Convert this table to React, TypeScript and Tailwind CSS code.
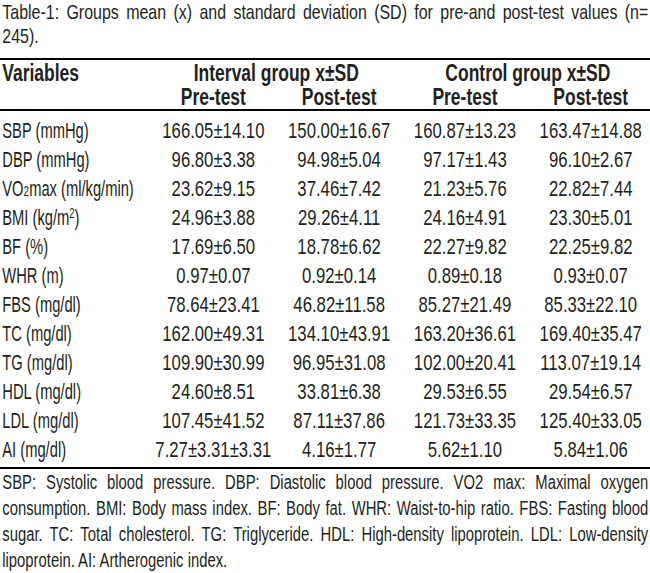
import { FC } from "react";

interface Row {
  label: React.ReactNode;
  values: string[];
}

const rows: Row[] = [
  { label: "SBP (mmHg)", values: ["166.05±14.10", "150.00±16.67", "160.87±13.23", "163.47±14.88"] },
  { label: "DBP (mmHg)", values: ["96.80±3.38", "94.98±5.04", "97.17±1.43", "96.10±2.67"] },
  {
    label: (
      <>
        VO<span className="text-[15px]">2</span>max (ml/kg/min)
      </>
    ),
    values: ["23.62±9.15", "37.46±7.42", "21.23±5.76", "22.82±7.44"],
  },
  {
    label: (
      <>
        BMI (kg/m<sup className="text-[14px]">2</sup>)
      </>
    ),
    values: ["24.96±3.88", "29.26±4.11", "24.16±4.91", "23.30±5.01"],
  },
  { label: "BF (%)", values: ["17.69±6.50", "18.78±6.62", "22.27±9.82", "22.25±9.82"] },
  { label: "WHR (m)", values: ["0.97±0.07", "0.92±0.14", "0.89±0.18", "0.93±0.07"] },
  { label: "FBS (mg/dl)", values: ["78.64±23.41", "46.82±11.58", "85.27±21.49", "85.33±22.10"] },
  { label: "TC (mg/dl)", values: ["162.00±49.31", "134.10±43.91", "163.20±36.61", "169.40±35.47"] },
  { label: "TG (mg/dl)", values: ["109.90±30.99", "96.95±31.08", "102.00±20.41", "113.07±19.14"] },
  { label: "HDL (mg/dl)", values: ["24.60±8.51", "33.81±6.38", "29.53±6.55", "29.54±6.57"] },
  { label: "LDL (mg/dl)", values: ["107.45±41.52", "87.11±37.86", "121.73±33.35", "125.40±33.05"] },
  { label: "AI (mg/dl)", values: ["7.27±3.31±3.31", "4.16±1.77", "5.62±1.10", "5.84±1.06"] },
];

const footLines = [
  "SBP: Systolic blood pressure. DBP: Diastolic blood pressure. VO2 max: Maximal oxygen",
  "consumption. BMI: Body mass index. BF: Body fat. WHR: Waist-to-hip ratio. FBS: Fasting blood",
  "sugar. TC: Total cholesterol. TG: Triglyceride. HDL: High-density lipoprotein. LDL: Low-density",
];

// the source face is a condensed one; lay out wide and squeeze horizontally
const App: FC = () => {
  return (
    <div className="w-[650px] h-[573px] bg-white overflow-hidden">
      <div
        className="w-[860px] origin-top-left scale-x-[0.76] text-[#231f20]"
        style={{ fontFamily: '"Liberation Sans", Arial, sans-serif' }}
      >
        {/* caption */}
        <div className="w-[853px] text-[21px] leading-[24px] pl-[3px]">
          <div className="[text-align-last:justify] whitespace-nowrap">
            Table-1: Groups mean (x) and standard deviation (SD) for pre-and post-test values (n=
          </div>
          <div>245).</div>
        </div>

        <div className="mt-[10px] border-t-2 border-black" />

        {/* header */}
        <div className="pt-[1px] font-bold text-[23px] leading-[24px]">
          <div className="grid grid-cols-[198px_repeat(4,1fr)]">
            <div className="pl-[3px]">Variables</div>
            <div className="col-span-2 text-center">Interval group x±SD</div>
            <div className="col-span-2 text-center">Control group x±SD</div>
          </div>
          <div className="grid grid-cols-[198px_repeat(4,1fr)]">
            <div />
            <div className="text-center">Pre-test</div>
            <div className="text-center">Post-test</div>
            <div className="text-center">Pre-test</div>
            <div className="text-center">Post-test</div>
          </div>
        </div>

        <div className="border-t-2 border-black" />

        {/* body */}
        <div className="pt-[3px] text-[22px]">
          {rows.map((row, i) => (
            <div key={i} className="grid grid-cols-[198px_repeat(4,1fr)] h-[29px] items-center">
              <div className="pl-[3px] whitespace-nowrap">
                <span className="inline-block origin-left scale-x-[0.88]">{row.label}</span>
              </div>
              {row.values.map((v, j) => (
                <div key={j} className="text-center whitespace-nowrap">
                  {v}
                </div>
              ))}
            </div>
          ))}
        </div>

        <div className="mt-[5px] border-t-2 border-black" />

        {/* footnote */}
        <div className="w-[853px] text-[19.5px] leading-[26px] pl-[3px]">
          {footLines.map((line) => (
            <div key={line} className="[text-align-last:justify] whitespace-nowrap">
              {line}
            </div>
          ))}
          <div>lipoprotein. AI: Artherogenic index.</div>
        </div>
      </div>
    </div>
  );
};

export default App;
